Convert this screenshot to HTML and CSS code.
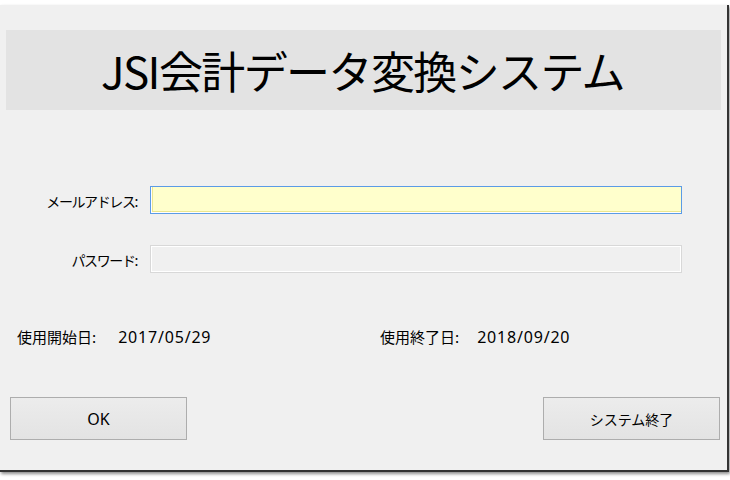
FILE: index.html
```html
<!DOCTYPE html>
<html lang="ja">
<head>
<meta charset="utf-8">
<link rel="stylesheet" href="styles.css">
</head>
<body>
<div class="window">
  <div class="banner"><span class="title">JSI会計データ変換システム</span></div>
  <div class="form">
    <div class="row row-email">
      <label class="label">メールアドレス:</label>
      <div class="input input-email"></div>
    </div>
    <div class="row row-pass">
      <label class="label">パスワード:</label>
      <div class="input input-pass"></div>
    </div>
  </div>
  <div class="dates">
    <div class="date date-start"><span class="dlabel">使用開始日:</span><span class="dval">2017/05/29</span></div>
    <div class="date date-end"><span class="dlabel">使用終了日:</span><span class="dval dval-end">2018/09/20</span></div>
  </div>
  <div class="buttons">
    <button class="btn btn-ok">OK</button>
    <button class="btn">システム終了</button>
  </div>
</div>
</body>
</html>
```

FILE: styles.css
```css
html, body {
  margin: 0;
  padding: 0;
  background: #ffffff;
}
body {
  font-family: "Noto Sans CJK JP", "Noto Sans", sans-serif;
  color: #000;
  width: 730px;
  height: 480px;
  overflow: hidden;
}
.window {
  margin-top: 5px;
  width: 727px;
  height: 465px;
  background: #f0f0f0;
  border-right: 2px solid #333;
  border-bottom: 2px solid #333;
  box-shadow: 1px 2px 3px rgba(0,0,0,0.45);
  display: flex;
  flex-direction: column;
  box-sizing: content-box;
}
.banner {
  margin: 25px 6px 0 6px;
  height: 80px;
  background: #e3e3e3;
  display: flex;
  align-items: center;
  justify-content: center;
}
.title {
  font-size: 44px;
  line-height: 1;
  letter-spacing: -1.6px;
  padding-right: 2px;
}
.form {
  margin-top: 76px;
  display: flex;
  flex-direction: column;
  gap: 31px;
}
.row {
  display: flex;
  align-items: center;
  height: 28px;
}
.label {
  text-align: right;
  font-size: 14px;
  letter-spacing: -1.4px;
  padding-right: 13px;
  box-sizing: border-box;
  width: 150px;
  padding-top: 1px;
}
.input {
  width: 532px;
  height: 28px;
  box-sizing: border-box;
}
.input-email {
  border: 1px solid #5b9be6;
  background: #ffffcc;
  box-shadow: inset 1px -1px 0 #ffffff, inset 2px -2px 0 #ebe68f;
}
.input-pass {
  border: 1px solid #d8d8d8;
  background: #f0f0f0;
  box-shadow: inset 0 0 0 1px #ffffff;
}
.dates {
  margin-top: 52px;
  display: flex;
  height: 24px;
  align-items: center;
  font-size: 15px;
}
.date {
  display: flex;
  align-items: baseline;
}
.date-start {
  margin-left: 17px;
  width: 363px;
}
.dval {
  font-family: "Noto Sans", "Noto Sans CJK JP", sans-serif;
  font-size: 16px;
  letter-spacing: 0.8px;
  margin-left: 22px;
}
.dval-end {
  margin-left: 18px;
}
.buttons {
  margin-top: 48px;
  padding: 0 7px 0 10px;
  display: flex;
  justify-content: space-between;
}
.btn {
  width: 177px;
  height: 43px;
  border: 1px solid #adadad;
  background: linear-gradient(#ececec, #e3e3e3);
  font-family: "Noto Sans CJK JP", "Noto Sans", sans-serif;
  font-size: 14px;
  color: #000;
  padding: 0;
}
.btn-ok {
  font-family: "Noto Sans", "Noto Sans CJK JP", sans-serif;
  font-size: 16px;
}
```
